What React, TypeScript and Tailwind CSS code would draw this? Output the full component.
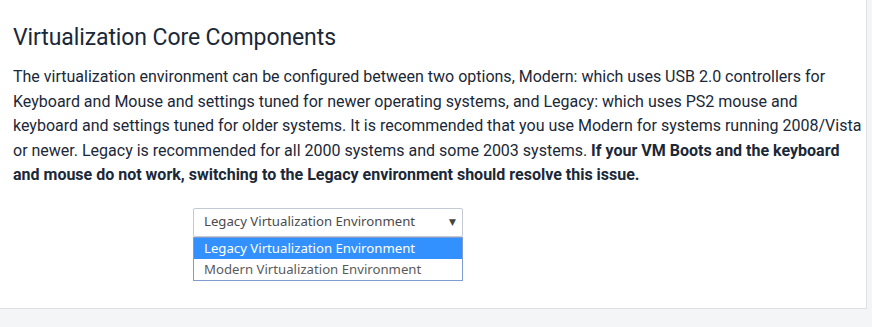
export default function App() {
  return (
    <main className="min-h-[327px] bg-[#f4f5f7]" style={{ fontFamily: 'Roboto, "Liberation Sans", sans-serif' }}>
      <div className="w-[867px] bg-white border-r border-b border-[#dfe1e4] pl-[13px] pr-[20px] pt-[22px] pb-[27px] text-[#1a2838]">
        <h2 className="text-[23px] leading-[32px] font-normal tracking-[-0.1px]">Virtualization Core Components</h2>
        <p className="mt-[11px] text-[16px] leading-[24.5px] whitespace-nowrap">
          The virtualization environment can be configured between two options, Modern: which uses USB 2.0 controllers for
          <br />
          Keyboard and Mouse and settings tuned for newer operating systems, and Legacy: which uses PS2 mouse and
          <br />
          keyboard and settings tuned for older systems. It is recommended that you use Modern for systems running 2008/Vista
          <br />
          or newer. Legacy is recommended for all 2000 systems and some 2003 systems.{' '}
          <b className="font-bold">If your VM Boots and the keyboard</b>
          <br />
          <b className="font-bold">and mouse do not work, switching to the Legacy environment should resolve this issue.</b>
        </p>
        <div className="mt-[20px] ml-[180px] w-[270px]" style={{ fontFamily: '"Noto Sans", "DejaVu Sans", sans-serif' }}>
          {/* closed select */}
          <div className="h-[29px] flex items-center justify-between border border-[#c3cad6] rounded-[2px] pl-[10px] pr-[6px] text-[13.2px] text-[#4a4a4a]">
            <span>Legacy Virtualization Environment</span>
            <span className="text-[9px] text-[#444]">▼</span>
          </div>
          {/* open option list */}
          <div className="border border-[#7f9bd0] text-[13.2px]">
            <div className="h-[21px] leading-[21px] pl-[10px] bg-[#3390ff] text-white">Legacy Virtualization Environment</div>
            <div className="h-[21px] leading-[21px] pl-[10px] text-[#5a5a5a]">Modern Virtualization Environment</div>
          </div>
        </div>
      </div>
    </main>
  )
}
